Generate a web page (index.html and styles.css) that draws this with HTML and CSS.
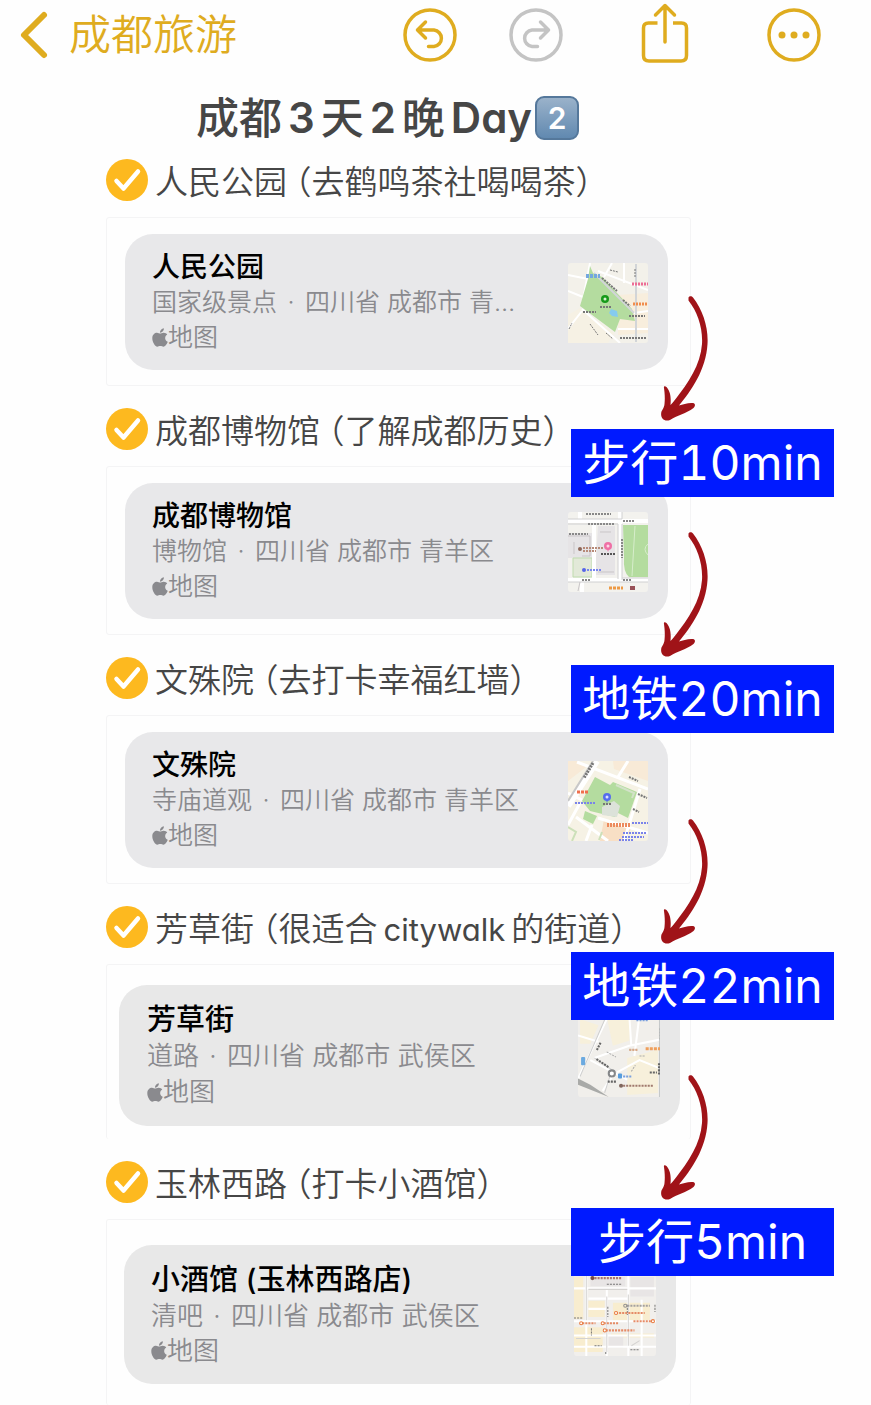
FILE: index.html
```html
<!doctype html>
<html lang="zh-CN">
    <head>
        <meta charset="UTF-8" />
        <meta name="viewport" content="width=device-width, initial-scale=1.0" />
        <title>成都旅游</title>
        <link rel="stylesheet" href="styles.css">
    </head>
    <body>
        <!-- shared shapes -->
        <svg class="defs" aria-hidden="true">
            <symbol id="check" viewBox="0 0 42 42">
                <circle cx="21" cy="21" r="21" fill="#fdb91f" />
                <path d="M10.500 22 L17.500 29.500 L32 12.500" fill="none" stroke="#fff" stroke-width="4.500" stroke-linecap="round" stroke-linejoin="round" />
            </symbol>
            <symbol id="apple" viewBox="0 0 384 512">
                <path d="M318.700 268.700c-.2-36.700 16.400-64.400 50-84.800-18.800-26.900-47.200-41.700-84.700-44.600-35.500-2.800-74.300 20.700-88.500 20.700-15 0-49.400-19.700-76.400-19.700C63.300 141.200 4 184.800 4 273.500q0 39.300 14.400 81.200c12.800 36.700 59 126.700 107.200 125.200 25.200-.6 43-17.900 75.800-17.900 31.800 0 48.300 17.900 76.400 17.900 48.600-.7 90.400-82.500 102.600-119.300-65.200-30.700-61.700-90-61.700-91.900zm-56.600-164.200c27.300-32.400 24.800-61.900 24-72.500-24.100 1.400-52 16.400-67.900 34.900-17.500 19.800-27.800 44.300-25.600 71.900 26.100 2 49.900-11.400 69.500-34.300z" fill="currentColor" />
            </symbol>
            <symbol id="arrow" viewBox="0 0 50 126">
                <path d="M28.500 2.500 C29.500 0.500 32 1 33 2.500 C43 15 48.500 33 47.500 49 C46 75 31 96 19 110.500 C23 109.500 28 107.500 33 108 C35.500 108.500 35.500 110.500 33.500 113 C26 118.500 18 120 10 125 C4 127 0.500 123 1.200 118 C1.500 115 4 114 4.500 109 C5.200 102 4.500 97 4 93 C3.500 91 5 90.500 6.500 92 C11 97 11 104 10.500 110 C12.500 108 14 106 16 103.500 C28 88 40.500 70 42 49 C43 33 37.500 17 28.500 5.500 Z" fill="#a01318" />
            </symbol>
        </svg>

        <header class="navbar">
            <a href="#" class="back">
                <svg width="30" height="50" viewBox="0 0 30 50" fill="none" stroke="currentColor" stroke-width="6" stroke-linecap="round" stroke-linejoin="round">
                    <path d="M25 5 L5 25 L25 45" />
                </svg>
                <span>成都旅游</span>
            </a>
            <div class="tools">
                <div class="history">
                    <button type="button" class="tool" aria-label="撤销">
                        <svg width="54" height="54" viewBox="0 0 54 54" fill="none" stroke="currentColor" stroke-width="3.500" stroke-linecap="round" stroke-linejoin="round">
                            <circle cx="27" cy="27" r="25" />
                            <path d="M22.500 14 L14.500 22 L22.500 30 M14.500 22 H31 A8.300 8.300 0 0 1 31 38.500 H25.500" />
                        </svg>
                    </button>
                    <button type="button" class="tool" aria-label="重做" disabled>
                        <svg width="54" height="54" viewBox="0 0 54 54" fill="none" stroke="currentColor" stroke-width="3.500" stroke-linecap="round" stroke-linejoin="round">
                            <circle cx="27" cy="27" r="25" />
                            <path d="M31.500 14 L39.500 22 L31.500 30 M39.500 22 H23 A8.300 8.300 0 0 0 23 38.500 H28.500" />
                        </svg>
                    </button>
                </div>
                <button type="button" class="tool" aria-label="共享">
                    <svg width="48" height="64" viewBox="0 0 48 64" fill="none" stroke="currentColor" stroke-width="3.500" stroke-linecap="round" stroke-linejoin="round">
                        <path d="M24 39 V3 M14.500 12 L24 2.500 L33.500 12" />
                        <path d="M16.500 20 H7.500 Q2.500 20 2.500 25 V52.500 Q2.500 58 8 58 H40 Q45.500 58 45.500 52.500 V25 Q45.500 20 40.500 20 H32" stroke-linecap="butt" />
                    </svg>
                </button>
                <button type="button" class="tool" aria-label="更多">
                    <svg width="54" height="54" viewBox="0 0 54 54">
                        <circle cx="27" cy="27" r="25" fill="none" stroke="currentColor" stroke-width="3.500" />
                        <g fill="currentColor">
                            <circle cx="15" cy="27" r="3.500" />
                            <circle cx="27" cy="27" r="3.500" />
                            <circle cx="39" cy="27" r="3.500" />
                        </g>
                    </svg>
                </button>
            </div>
        </header>

        <main class="note">
            <h1>成都<span class="latin">3</span>天<span class="latin">2</span>晚<span class="latin">Day</span><span class="keycap">2</span></h1>

            <section class="stop">
                <label class="stop-head">
                    <input type="checkbox" checked />
                    <svg class="tick"><use href="#check" /></svg>
                    <span>人民公园<span class="paren open">（</span>去鹤鸣茶社喝喝茶<span class="paren">）</span></span>
                </label>
                <div class="frame">
                    <a href="#" class="card">
                        <div class="info">
                            <h2>人民公园</h2>
                            <p>国家级景点<i class="dot">·</i>四川省 成都市 青…</p>
                            <p class="source"><svg class="apple"><use href="#apple" /></svg>地图</p>
                        </div>
                        <svg class="map" viewBox="0 0 80 80">
                            <rect width="80" height="80" rx="3" fill="#f3f1ea" />
                            <path d="M50 32 L80 30 V70 L50 72 Z" fill="#f8eedd" />
                            <path d="M0 52 L12 45 L46 70 L40 80 H0 Z" fill="#f6f1e4" />
                            <g stroke="#fff" stroke-width="2" fill="none">
                                <path d="M0 12 L20 16 M0 28 L15 34 M22 0 L14 42 M30 8 L80 27 M44 0 L36 14 M50 66 H80 M0 66 L14 48 M14 46 L52 80 M56 0 V20 M66 50 L80 48" />
                            </g>
                            <path d="M22 3 L25 10 L34 14 L64 46 L67 58 L52 56 L47 69 L12 43 L20 16 Z" fill="#b4dc9f" />
                            <path d="M26 10 L66 50 M68 1 V79" stroke="#d2d5d8" stroke-width="2" />
                            <path d="M43 46 L49 48 L50 54 L44 53 L41 50 Z" fill="#85cbee" />
                            <path d="M18 13 H32" stroke="#74a7df" stroke-width="4" stroke-dasharray="3 1" />
                            <g stroke="#777" stroke-width="2" stroke-dasharray="2 1">
                                <path d="M34 15 L49 28 M55 37 L62 43 M15 49 H28 M32 44 H43 M61 53 H77 M52 75 H79" />
                                <path d="M42 7 L50 9 M22 61 L30 72 M38 70 L45 76 M67 6 V15 M1 66 L4 60" stroke-width="1" />
                            </g>
                            <path d="M64 21 H80" stroke="#ed6c95" stroke-width="3" stroke-dasharray="2 1" />
                            <path d="M65 41 H80" stroke="#f08c4c" stroke-width="3" stroke-dasharray="2 1" />
                            <circle cx="37" cy="36" r="4" fill="#159a19" />
                            <circle cx="37" cy="36" r="1.500" fill="#d9f2cf" />
                        </svg>
                    </a>
                </div>
                <div class="leg leg-1">
                    <svg class="arrow"><use href="#arrow" /></svg>
                    <div class="badge">步行10min</div>
                </div>
            </section>

            <section class="stop">
                <label class="stop-head">
                    <input type="checkbox" checked />
                    <svg class="tick"><use href="#check" /></svg>
                    <span>成都博物馆<span class="paren open">（</span>了解成都历史<span class="paren">）</span></span>
                </label>
                <div class="frame">
                    <a href="#" class="card">
                        <div class="info">
                            <h2>成都博物馆</h2>
                            <p>博物馆<i class="dot">·</i>四川省 成都市 青羊区</p>
                            <p class="source"><svg class="apple"><use href="#apple" /></svg>地图</p>
                        </div>
                        <svg class="map" viewBox="0 0 80 80">
                            <rect width="80" height="80" rx="3" fill="#f3f2ee" />
                            <path d="M0 21 H24 V46 H0 Z M30 14 H47 V63 H27 Z" fill="#e6e4e6" />
                            <path d="M5 46 H24 V65 H5 Z" fill="#e2e9d8" stroke="#bfdcae" />
                            <path d="M55 13 H80 V65 H61 Q55 60 56 45 Z" fill="#b4dc9f" />
                            <path d="M67 14 L64 64 M80 32 Q74 37 80 43" stroke="#d7edcb" fill="none" />
                            <path d="M0 9 H80 M52 0 V69 M0 68 H80 M26 12 V66 M12 0 V9 M14 68 V80" stroke="#fff" stroke-width="4" />
                            <path d="M0 7 H54 M0 12 H50 M54 12 V68 M50 12 V67 M54 7 V0 M0 70 H80 M54 66 H80" stroke="#d0d0d1" />
                            <path d="M0 24 H22 V44 H14 M6 30 V42 M32 20 H43 M30 60 H46 M12 70 L10 79" stroke="#c9c5c7" fill="none" />
                            <g stroke="#888" stroke-width="2" stroke-dasharray="2 1">
                                <path d="M18 2 H43 M20 12 H46 M55 9 H67 M54 27 V46 M1 22 H20 M14 68 H22 M55 68 H64" />
                                <path d="M33 42 H47" stroke="#555" />
                            </g>
                            <circle cx="12" cy="37" r="2" fill="#8e6658" />
                            <path d="M15 36 H35 M15 39 H28" stroke="#b78a78" stroke-width="2" stroke-dasharray="2 1" />
                            <circle cx="16" cy="58" r="2" fill="#5565e8" />
                            <path d="M19 58 H34" stroke="#7885ef" stroke-width="2" stroke-dasharray="2 1" />
                            <path d="M41 76 H55" stroke="#ed9a45" stroke-width="3" stroke-dasharray="3 1" />
                            <path d="M62 76 H67" stroke="#985157" stroke-width="4" />
                            <circle cx="40" cy="34" r="4" fill="#ef70a5" />
                            <circle cx="40" cy="34" r="1.500" fill="#ffd5e5" />
                            <path d="M39 37 H41 L40 40 Z" fill="#ef70a5" />
                        </svg>
                    </a>
                </div>
                <div class="leg leg-2">
                    <svg class="arrow"><use href="#arrow" /></svg>
                    <div class="badge">地铁20min</div>
                </div>
            </section>

            <section class="stop">
                <label class="stop-head">
                    <input type="checkbox" checked />
                    <svg class="tick"><use href="#check" /></svg>
                    <span>文殊院<span class="paren open">（</span>去打卡幸福红墙<span class="paren">）</span></span>
                </label>
                <div class="frame">
                    <a href="#" class="card">
                        <div class="info">
                            <h2>文殊院</h2>
                            <p>寺庙道观<i class="dot">·</i>四川省 成都市 青羊区</p>
                            <p class="source"><svg class="apple"><use href="#apple" /></svg>地图</p>
                        </div>
                        <svg class="map" viewBox="0 0 80 80">
                            <rect width="80" height="80" rx="3" fill="#f6f2e5" />
                            <path d="M45 0 H80 V20 L46 8 Z M0 20 L18 6 L10 0 H0 Z" fill="#f8ead7" />
                            <path d="M36 58 L64 66 L56 80 H32 Z" fill="#f8dfc5" />
                            <path d="M27 16 L42 24 L45 21 L69 31 L60 57 L50 52 L47 56 L22 50 L14 40 Z" fill="#b4dc9f" />
                            <path d="M17 50 L29 55 L25 63 L15 58 Z" fill="#b4dc9f" />
                            <path d="M34 46 L46 40 L52 45 L49 56 L34 54 Z" fill="#dce2d9" />
                            <path d="M48 24 L66 32 L64 37" stroke="#d3e2c9" stroke-width="2" fill="none" />
                            <g stroke="#fff" stroke-width="3" fill="none">
                                <path d="M9 1 L80 28 M72 28 L56 80 M12 42 L0 64 M8 56 L40 80 M0 32 L14 39 M30 57 L80 72 M24 64 L18 80 M60 0 L50 16" />
                            </g>
                            <path d="M29 0 L0 45" stroke="#fff" stroke-width="6" />
                            <path d="M25 0 L0 40" stroke="#c8c8c8" stroke-width="2" />
                            <path d="M0 66 L8 71 L4 80 M34 71 L31 79" stroke="#cce0b9" fill="none" stroke-width="2" />
                            <g stroke="#777" stroke-width="2" stroke-dasharray="2 1">
                                <path d="M25 2 L16 17" stroke-width="3" />
                                <path d="M61 16 L70 20 M70 33 L79 37 M65 48 L71 51 M35 43 H43" />
                            </g>
                            <path d="M9 31 H21" stroke="#ef704d" stroke-width="3" stroke-dasharray="3 1" />
                            <path d="M39 64 H62" stroke="#ec8a5d" stroke-width="4" stroke-dasharray="2 1" />
                            <path d="M7 42 H27 M64 62 H80 M55 72 H78 M54 76 H76 M51 79 H65" stroke="#7a83ea" stroke-width="2" stroke-dasharray="2 1" />
                            <circle cx="39" cy="36" r="4" fill="#556ded" />
                            <circle cx="39" cy="36" r="1.500" fill="#dbe1ff" />
                            <path d="M38 39 H40 L39 42 Z" fill="#556ded" />
                        </svg>
                    </a>
                </div>
                <div class="leg leg-3">
                    <svg class="arrow"><use href="#arrow" /></svg>
                    <div class="badge">地铁22min</div>
                </div>
            </section>

            <section class="stop stop-street">
                <label class="stop-head">
                    <input type="checkbox" checked />
                    <svg class="tick"><use href="#check" /></svg>
                    <span>芳草街<span class="paren open">（</span>很适合<span class="latin">citywalk</span>的街道<span class="paren">）</span></span>
                </label>
                <div class="frame">
                    <a href="#" class="card">
                        <div class="info">
                            <h2>芳草街</h2>
                            <p>道路<i class="dot">·</i>四川省 成都市 武侯区</p>
                            <p class="source"><svg class="apple"><use href="#apple" /></svg>地图</p>
                        </div>
                        <svg class="map" viewBox="0 0 80 80">
                            <rect width="80" height="80" rx="3" fill="#f1efeb" />
                            <path d="M28 2 L52 0 L50 25 L34 30 Z M48 42 L78 34 V76 L48 78 Z M2 4 L20 10 L12 28 H2 Z" fill="#f7f0db" />
                            <g stroke="#fff" stroke-width="2" fill="none">
                                <path d="M0 20 L20 26 M30 0 L0 62 M12 44 L48 63 M16 42 L50 30 L80 24 M50 0 L52 30 M36 56 L24 74 M38 56 L60 44 L80 52 M60 0 L55 40" />
                            </g>
                            <path d="M28 0 L2 60 M16 42 L34 54 M32 57 L26 76" stroke="#cfcfcf" fill="none" />
                            <path d="M80 4 V80" stroke="#c6c9ca" stroke-width="2" />
                            <path d="M0 62 L12 68 L30 80 L0 68 Z" fill="#a9aaa8" />
                            <g stroke="#666" stroke-width="2" stroke-dasharray="2 1">
                                <path d="M22 27 L18 35 M18 43 L30 51 M79 47 V59 M29 65 H37 M70 56 H77" />
                                <path d="M80 13 V24 M28 36 L37 41 M50 34 H57 M60 40 H66 M52 55 L56 49" stroke="#aaa" stroke-width="1" />
                            </g>
                            <rect x="3" y="41" width="4" height="8" rx="1" fill="#6baae0" />
                            <rect x="39" y="57" width="4" height="5" rx="1" fill="#579dde" />
                            <path d="M44 60 H53 M57 5 H68" stroke="#7aa0df" stroke-width="2" stroke-dasharray="2 1" />
                            <path d="M66 33 H80" stroke="#efa05d" stroke-width="3" stroke-dasharray="3 1" />
                            <path d="M50 34 H58" stroke="#d9a987" stroke-width="2" stroke-dasharray="2 1" />
                            <path d="M41 69 H73" stroke="#a0796d" stroke-width="2" stroke-dasharray="2 1" />
                            <circle cx="42" cy="69" r="2" fill="#80675e" />
                            <circle cx="33" cy="57" r="3" fill="#fff" stroke="#858789" stroke-width="2" />
                        </svg>
                    </a>
                </div>
                <div class="leg leg-4">
                    <svg class="arrow"><use href="#arrow" /></svg>
                    <div class="badge">步行5min</div>
                </div>
            </section>

            <section class="stop stop-bar">
                <label class="stop-head">
                    <input type="checkbox" checked />
                    <svg class="tick"><use href="#check" /></svg>
                    <span>玉林西路<span class="paren open">（</span>打卡小酒馆<span class="paren">）</span></span>
                </label>
                <div class="frame">
                    <a href="#" class="card">
                        <div class="info">
                            <h2>小酒馆 (玉林西路店)</h2>
                            <p>清吧<i class="dot">·</i>四川省 成都市 武侯区</p>
                            <p class="source"><svg class="apple"><use href="#apple" /></svg>地图</p>
                        </div>
                        <svg class="map" viewBox="0 0 80 80">
                            <rect width="80" height="80" rx="3" fill="#f1efec" />
                            <path d="M0 3 H9 V44 H0 Z M14 26 H30 V42 H14 Z M38 28 H74 V45 H38 Z M0 52 H28 V76 H0 Z M36 58 H78 V62 H36 Z" fill="#f8edcf" />
                            <path d="M16 3 H50 V12 H16 Z M55 3 H78 V22 H55 Z M34 60 H48 V72 H34 Z" fill="#e8e5e5" />
                            <g stroke="#fff" stroke-width="2">
                                <path d="M0 14 H80 M12 0 V80 M32 14 V80 M53 0 V80 M0 46 H80 M0 60 H80 M0 71 H80 M66 25 V80 M14 24 H52 M14 34 H32" />
                            </g>
                            <path d="M12 0 V45 M32 22 V76 M53 20 V70 M14 15 H52 M2 63 H26 M56 70 L64 65" stroke="#d5d3d1" />
                            <g stroke="#777" stroke-width="1" stroke-dasharray="2 1">
                                <path d="M0 43 H8 M33 32 V42 M20 70 H27 M55 74 H63 M17 53 V60 M31 76 V79 M32 10 H46 M52 30 V40 M79 30 V37" />
                            </g>
                            <path d="M20 4 H47" stroke="#a97770" stroke-width="2" stroke-dasharray="2 1" />
                            <circle cx="18" cy="4" r="2" fill="#784c45" />
                            <path d="M52 31 H74" stroke="#a4a1a0" stroke-width="2" stroke-dasharray="2 1" />
                            <circle cx="50" cy="31" r="1.500" fill="none" stroke="#929090" />
                            <path d="M41 38 H69 M8 48 H21 M29 48 H43 M58 46 H75 M31 55 H59" stroke="#e58b66" stroke-width="2" stroke-dasharray="2 1" />
                            <g fill="#fff" stroke="#e8793e">
                                <circle cx="41" cy="38" r="1.500" />
                                <circle cx="7" cy="48" r="1.500" />
                                <circle cx="28" cy="48" r="1.500" />
                                <circle cx="30" cy="55" r="1.500" />
                                <circle cx="77" cy="46" r="1.500" />
                            </g>
                        </svg>
                    </a>
                </div>
            </section>
        </main>
    </body>
</html>
```
FILE: styles.css
```css
* {
    box-sizing: border-box;
}
body {
    margin: 0;
    background-color: #fefefe;
    color: #464646;
    font-family: Inter, "Noto Sans CJK SC", sans-serif;
}
a {
    color: inherit;
    text-decoration: none;
}
h1,
h2,
p {
    margin: 0;
}
.defs {
    position: absolute;
    width: 0;
    height: 0;
}

/* top bar */
.navbar {
    display: flex;
    align-items: center;
    justify-content: space-between;
    height: 72px;
    padding: 0 50px 2px 19px;
    color: #dfac1f;
}
.back {
    display: flex;
    align-items: center;
    gap: 20px;
    font-size: 42px;
    font-weight: 350;
    line-height: 50px;
}
.tools {
    display: flex;
    align-items: center;
    gap: 78px;
}
.history {
    display: flex;
    gap: 52px;
}
.tool {
    padding: 0;
    border: 0;
    background: none;
    color: inherit;
    cursor: pointer;
}
.tool:disabled {
    color: #c4c4c4;
    cursor: default;
}
.tool svg {
    display: block;
}

/* note */
.note {
    padding: 24px 180px 0 106px;
}
h1 {
    display: flex;
    align-items: center;
    justify-content: center;
    padding-right: 22px;
    font-size: 43px;
    font-weight: 500;
    line-height: 44px;
    white-space: nowrap;
}
.latin {
    margin: 0 6px;
    font-family: Inter, sans-serif;
    font-feature-settings: "cv11";
    line-height: 1;
}
h1 .latin {
    font-size: 42px;
    font-weight: 600;
}
h1 .latin:nth-last-of-type(2) {
    margin-right: 3px;
}
.keycap {
    width: 44px;
    height: 44px;
    border: 2px solid #55789b;
    border-radius: 9px;
    background: linear-gradient(#9ab2ca, #6189b0);
    color: #fff;
    font-size: 30px;
    font-weight: 600;
    line-height: 40px;
    text-align: center;
}

.stop {
    position: relative;
}
.stop-head {
    display: flex;
    gap: 7px;
    padding: 22px 0 16px;
    font-family: "Noto Sans CJK SC", sans-serif;
    font-size: 33px;
    font-weight: 350;
    line-height: 42px;
    white-space: nowrap;
}
.stop:first-of-type .stop-head {
    padding-top: 19px;
}
.stop-head input {
    position: absolute;
    width: 42px;
    height: 42px;
    margin: 0;
    opacity: 0;
}
.tick {
    width: 42px;
    height: 42px;
}
.stop-head .latin {
    font-size: 31px;
    font-weight: 400;
}
.paren {
    font-feature-settings: "halt";
}
.paren.open {
    margin-left: 8px;
}

.frame {
    padding: 16px 22px 15px 18px;
    border: 1px solid #f4f4f5;
    border-radius: 3px;
}
.card {
    display: flex;
    align-items: center;
    justify-content: space-between;
    padding: 16px 20px 15px 27px;
    border-radius: 28px;
    background-color: #e8e8ea;
    color: #8a8a8e;
    font-size: 25px;
    font-weight: 350;
    line-height: 35px;
    white-space: nowrap;
}
.card h2 {
    color: #000;
    font-size: 28px;
    font-weight: 500;
    line-height: 35px;
}
.dot {
    display: inline-block;
    width: 28px;
    font-style: normal;
    text-align: center;
}
.source {
    display: flex;
    align-items: center;
}
.apple {
    width: 16px;
    height: 21px;
}
.map {
    width: 80px;
    height: 80px;
}

/* the last two cards are slightly larger */
.stop-street .frame {
    padding: 20px 10px 13px 12px;
    border-bottom: 0;
}
.stop-street .card {
    padding: 17px 20px 16px 28px;
    background-color: #e8e8e8;
    font-size: 26px;
    line-height: 36px;
}
.stop-street h2,
.stop-bar h2 {
    font-size: 29px;
    line-height: 36px;
}
.stop-street .map,
.stop-bar .map {
    width: 82px;
    height: 82px;
}
.stop-bar .frame {
    padding: 25px 14px 21px 17px;
    border-bottom: 0;
}
.stop-bar .card {
    padding: 17px 20px 16px 27px;
    background-color: #e8e8e8;
    font-size: 26px;
}

/* travel time between two stops */
.leg {
    position: absolute;
    right: -143px;
    z-index: 1;
    width: 263px;
}
.leg-1 {
    top: 155px;
}
.leg-2 {
    top: 145px;
}
.leg-3 {
    top: 183px;
}
.leg-4 {
    top: 190px;
}
.arrow {
    display: block;
    width: 50px;
    height: 126px;
    margin: 0 0 8px 89px;
}
.badge {
    height: 68px;
    background-color: #001aff;
    color: #fff;
    font-size: 48px;
    font-variant-numeric: tabular-nums;
    line-height: 68px;
    text-align: center;
    white-space: nowrap;
}
```
